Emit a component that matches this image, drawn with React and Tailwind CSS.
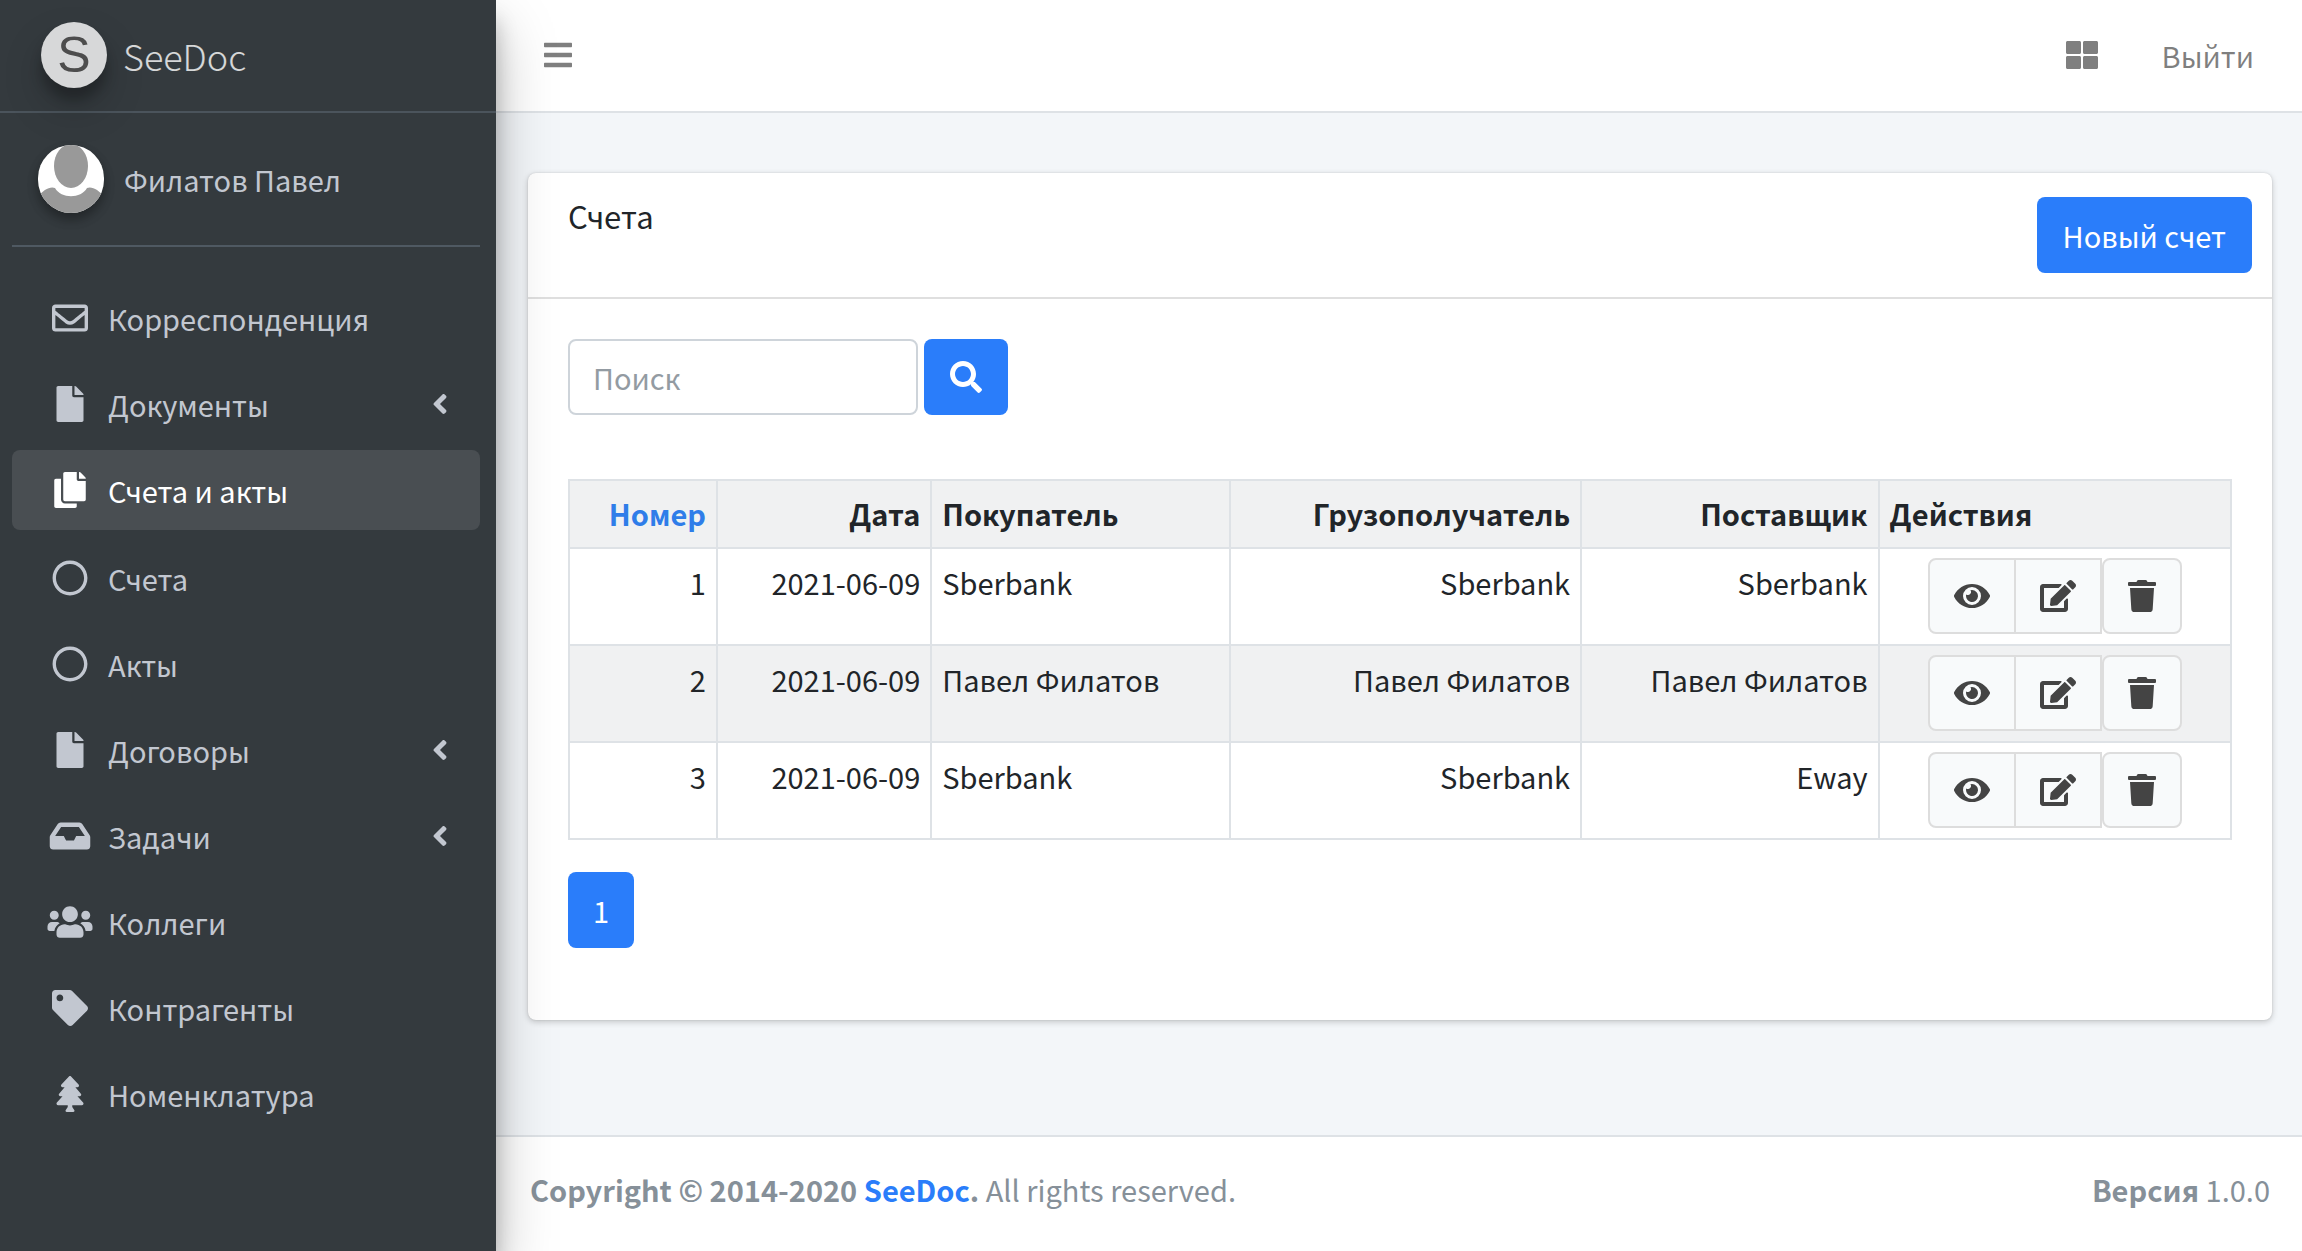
import {
  FaAngleLeft,
  FaBars,
  FaEdit,
  FaEye,
  FaFile,
  FaCopy,
  FaInbox,
  FaRegCircle,
  FaRegEnvelope,
  FaSearch,
  FaTag,
  FaThLarge,
  FaTrash,
  FaTree,
  FaUsers,
} from "react-icons/fa";

const NAV = [
  { label: "Корреспонденция", icon: FaRegEnvelope },
  { label: "Документы", icon: FaFile, tree: true },
  {
    label: "Счета и акты",
    icon: FaCopy,
    active: true,
    children: [
      { label: "Счета", icon: FaRegCircle },
      { label: "Акты", icon: FaRegCircle },
    ],
  },
  { label: "Договоры", icon: FaFile, tree: true },
  { label: "Задачи", icon: FaInbox, tree: true },
  { label: "Коллеги", icon: FaUsers },
  { label: "Контрагенты", icon: FaTag },
  { label: "Номенклатура", icon: FaTree },
];

const INVOICES = [
  { id: 1, date: "2021-06-09", buyer: "Sberbank", consignee: "Sberbank", supplier: "Sberbank" },
  { id: 2, date: "2021-06-09", buyer: "Павел Филатов", consignee: "Павел Филатов", supplier: "Павел Филатов" },
  { id: 3, date: "2021-06-09", buyer: "Sberbank", consignee: "Sberbank", supplier: "Eway" },
];

function NavItem({ item }) {
  const Icon = item.icon;
  return (
    <li className="mb-1.5">
      <a
        href="#"
        className={
          item.active
            ? "flex h-20 items-center rounded-lg bg-[#494e52] pl-8 pr-6 text-white"
            : "flex h-20 items-center rounded-lg pl-8 pr-6 text-[#c2c7d0]"
        }
      >
        <span className="flex w-[52px] shrink-0 justify-center">
          {/* wider than tall, so the wide glyphs keep the full height */}
          <Icon className="h-9 w-[46px]" />
        </span>
        <span className="flex-1 pl-3">{item.label}</span>
        {item.tree && <FaAngleLeft className="size-8" />}
      </a>
      {item.children && (
        <ul className="pt-2">
          {item.children.map((child) => (
            <NavItem key={child.label} item={child} />
          ))}
        </ul>
      )}
    </li>
  );
}

function Sidebar() {
  return (
    <aside className="relative z-10 w-[496px] shrink-0 bg-[#343a3e] shadow-[0_28px_56px_rgba(0,0,0,0.25),0_20px_20px_rgba(0,0,0,0.22)]">
      <a href="#" className="flex h-[113px] items-center border-b-2 border-[#4b545c] pb-0.5 pl-[41px] text-[36px] font-light text-white/80">
        <span className="flex size-[66px] items-center justify-center rounded-full bg-[#d7d8d9] font-['Liberation_Sans'] text-[50px] font-normal leading-none text-[#4d4d4d] shadow-[0_20px_40px_rgba(0,0,0,0.19),0_12px_12px_rgba(0,0,0,0.23)]">
          S
        </span>
        <span className="pl-4">SeeDoc</span>
      </a>
      <div className="pl-3 pr-4">
        <div className="flex h-[134px] items-center border-b-2 border-[#4f5962] pl-[26px]">
          <svg viewBox="0 0 66 68" className="h-[68px] w-[66px] rounded-full bg-white shadow-[0_6px_12px_rgba(0,0,0,0.16),0_6px_12px_rgba(0,0,0,0.23)]">
            <path fill="#999" d="M0 52C5 45 12 41 17 43C23 54 43 54 49 43C54 41 61 45 66 52V68H0Z" />
            <ellipse cx="33" cy="21" rx="17" ry="22" fill="#999" />
          </svg>
          <a href="#" className="pl-5 text-[#c2c7d0]">Филатов Павел</a>
        </div>
        <nav className="pt-[31px]">
          <ul>
            {NAV.map((item) => (
              <NavItem key={item.label} item={item} />
            ))}
          </ul>
        </nav>
      </div>
    </aside>
  );
}

function RowActions() {
  return (
    <div className="flex justify-center text-[#444]">
      <button aria-label="Просмотр" className="-mr-0.5 flex h-[76px] w-[88px] items-center justify-center rounded-l-lg border-2 border-[#ddd] bg-[#f8fafb]">
        <FaEye className="size-9" />
      </button>
      <button aria-label="Изменить" className="flex h-[76px] w-[88px] items-center justify-center border-2 border-[#ddd] bg-[#f8fafb]">
        <FaEdit className="size-9" />
      </button>
      <button aria-label="Удалить" className="flex h-[76px] w-20 items-center justify-center rounded-lg border-2 border-[#ddd] bg-[#f8fafb]">
        <FaTrash className="size-8" />
      </button>
    </div>
  );
}

function InvoiceTable() {
  const th = "border-2 border-[#dee2e6] px-2.5 pb-2.5 pt-2 font-bold";
  const td = "border-2 border-[#dee2e6] px-2.5 pb-2.5 pt-[9px] align-top";
  return (
    <table className="w-full table-fixed border-collapse">
      <colgroup>
        <col className="w-[8.9%]" />
        <col className="w-[12.9%]" />
        <col className="w-[18%]" />
        <col className="w-[21.1%]" />
        <col className="w-[17.9%]" />
        <col className="w-[21.2%]" />
      </colgroup>
      <thead>
        <tr className="bg-[#f0f1f2] text-right">
          <th className={th}>
            <a href="#" className="text-[#2f7de9]">Номер</a>
          </th>
          <th className={th}>Дата</th>
          <th className={`${th} text-left`}>Покупатель</th>
          <th className={th}>Грузополучатель</th>
          <th className={th}>Поставщик</th>
          <th className={`${th} text-left`}>Действия</th>
        </tr>
      </thead>
      <tbody>
        {INVOICES.map((row) => (
          <tr key={row.id} className="text-right even:bg-[#f0f1f2]">
            <td className={td}>{row.id}</td>
            <td className={td}>{row.date}</td>
            <td className={`${td} text-left`}>{row.buyer}</td>
            <td className={td}>{row.consignee}</td>
            <td className={td}>{row.supplier}</td>
            <td className={td}>
              <RowActions />
            </td>
          </tr>
        ))}
      </tbody>
    </table>
  );
}

export default function App() {
  return (
    <div className="flex min-h-screen bg-[#f3f6f9] font-['Noto_Sans_CJK_SC',sans-serif] text-[29px] leading-[48px] text-[#212529]">
      <Sidebar />
      <div className="flex min-w-0 flex-1 flex-col">
        <header className="flex h-[113px] items-center border-b-2 border-[#dee2e6] bg-white pb-0.5 pl-[46px] pr-12 text-black/50">
          <button aria-label="Меню">
            <FaBars className="size-8" />
          </button>
          <a href="#" aria-label="Приложения" className="ml-auto">
            <FaThLarge className="size-8" />
          </a>
          <a href="#" className="pl-16">Выйти</a>
        </header>

        <main className="flex-1 pb-8 pl-8 pr-[30px] pt-[60px]">
          <section className="rounded-lg bg-white shadow-[0_0_2px_rgba(0,0,0,0.13),0_2px_6px_rgba(0,0,0,0.2)]">
            <div className="flex items-start justify-between border-b-2 border-[#dfdfdf] py-6 pl-10 pr-5">
              <h1 className="text-[31px] leading-[38px]">Счета</h1>
              <button className="h-[76px] rounded-lg bg-[#2a7dfa] px-[26px] text-white">Новый счет</button>
            </div>
            <div className="px-10 pb-[72px] pt-10">
              <form className="mb-16 flex gap-1.5">
                <input
                  type="text"
                  aria-label="Поиск"
                  placeholder="Поиск"
                  className="h-[76px] w-[350px] rounded-lg border-2 border-[#ced4da] bg-white px-[23px] placeholder:text-[#939ba2]"
                />
                <button type="button" aria-label="Найти" className="flex h-[76px] w-[84px] items-center justify-center rounded-lg bg-[#2a7dfa] text-white">
                  <FaSearch className="size-8" />
                </button>
              </form>
              <InvoiceTable />
              <nav className="mt-8 flex">
                <button className="h-[76px] w-[66px] rounded-lg bg-[#2a7dfa] text-white">1</button>
              </nav>
            </div>
          </section>
        </main>

        <footer className="flex h-[116px] items-start justify-between border-t-2 border-[#dee2e6] bg-white pl-[34px] pr-8 pt-7 text-[#869099]">
          <p>
            <strong>
              Copyright © 2014-2020 <a href="#" className="text-[#2a7dfa]">SeeDoc</a>.
            </strong>{" "}
            All rights reserved.
          </p>
          <p>
            <b>Версия</b> 1.0.0
          </p>
        </footer>
      </div>
    </div>
  );
}
